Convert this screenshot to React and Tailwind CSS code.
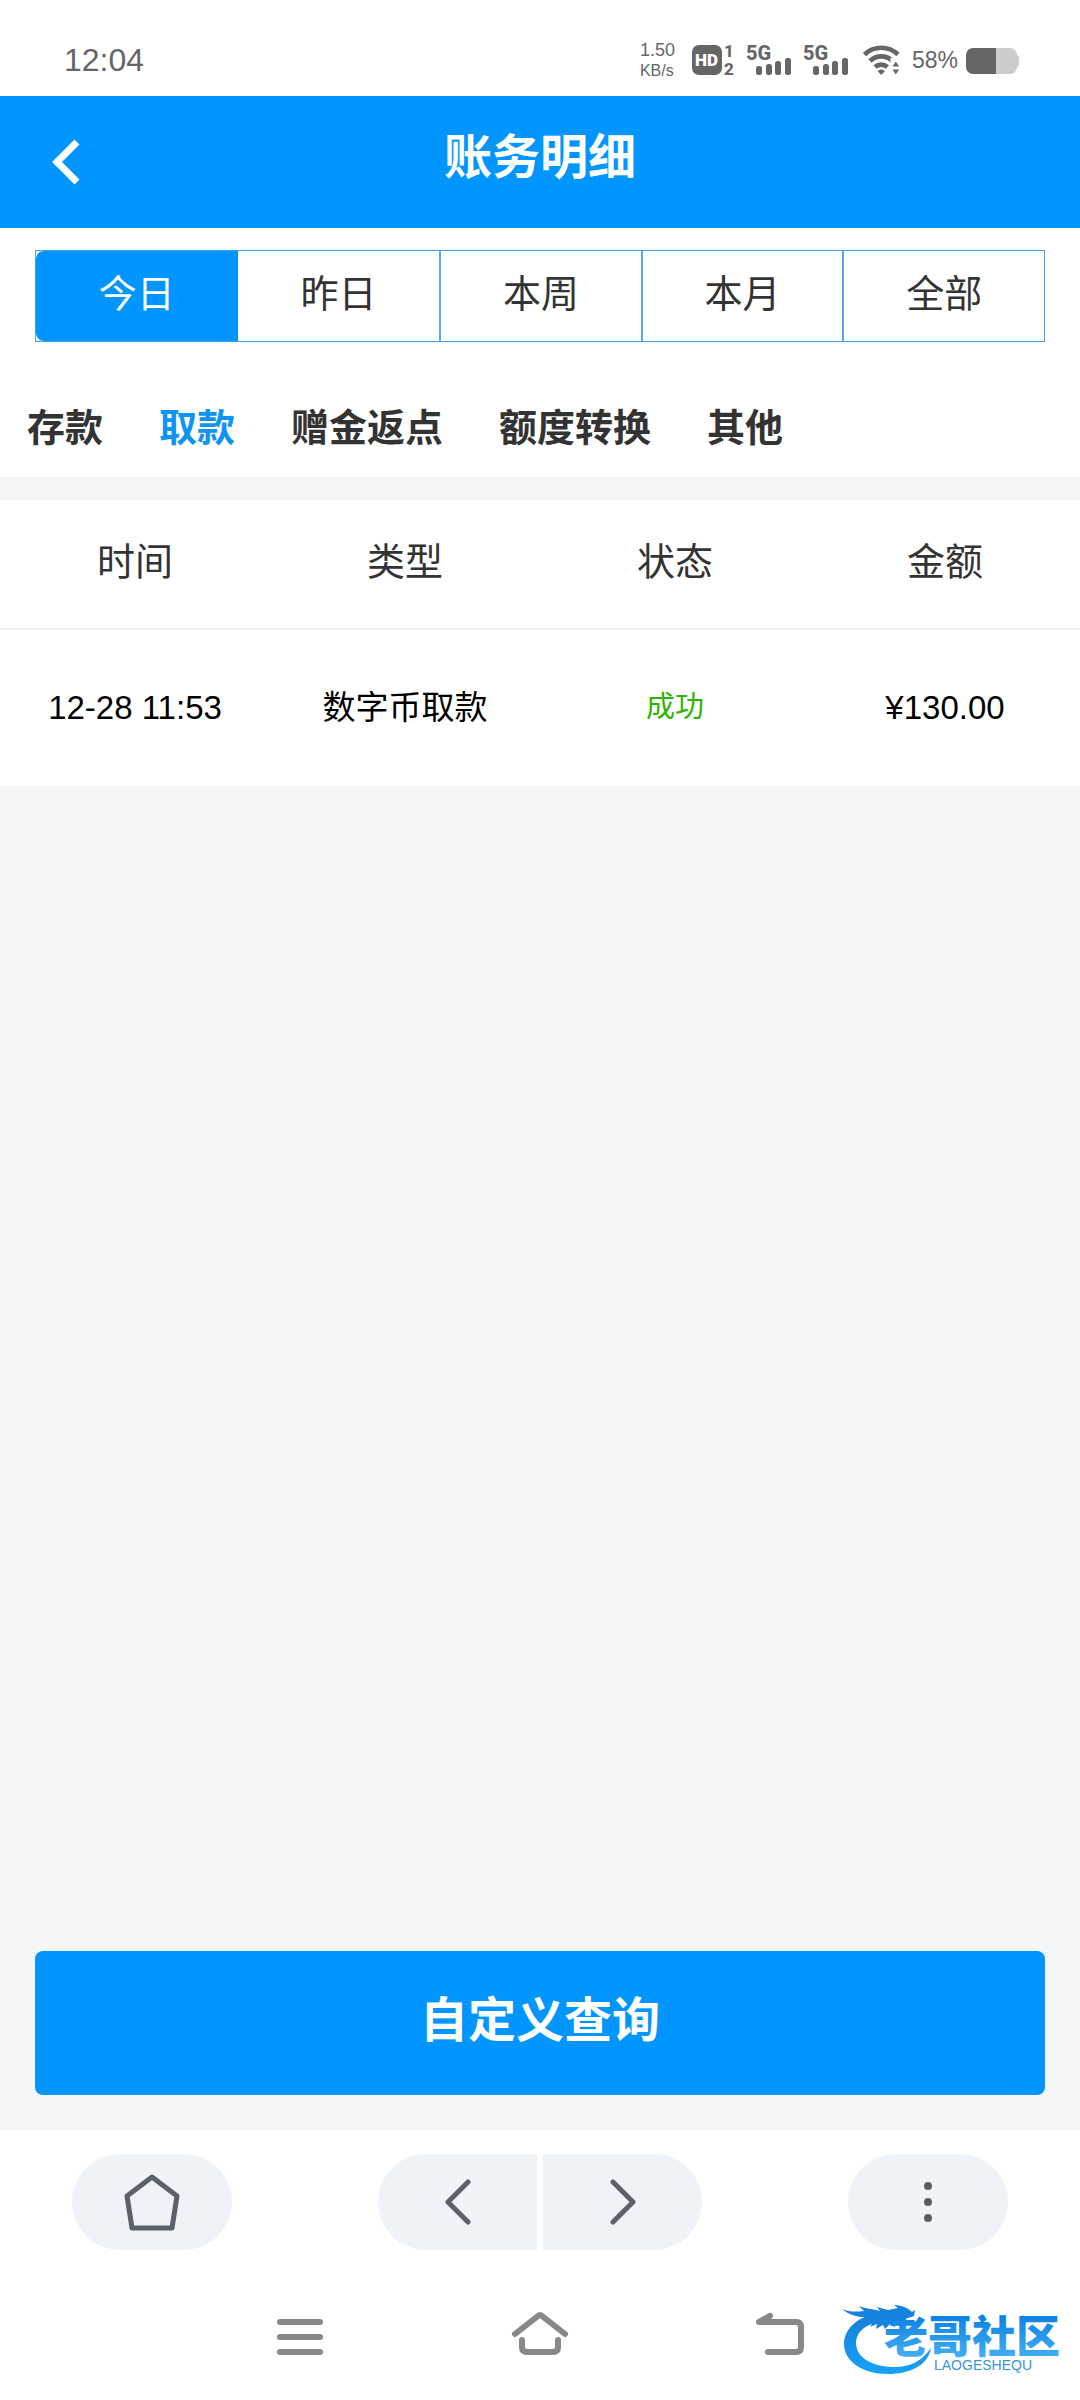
const ranges = ['今日', '昨日', '本周', '本月', '全部'];
const categories = ['存款', '取款', '赠金返点', '额度转换', '其他'];
const columns = ['时间', '类型', '状态', '金额'];
const records = [
  { time: '12-28 11:53', type: '数字币取款', status: '成功', amount: '¥130.00' },
];

function Signal() {
  return (
    <svg width="46" height="44" viewBox="0 -6 46 44" fill="#666">
      <text x="0" y="16" fontSize="20" fontWeight="800" fontFamily="Roboto, sans-serif">5G</text>
      <rect x="10" y="22" width="6" height="9" rx="2.5" />
      <rect x="20" y="20" width="6" height="11" rx="2.5" />
      <rect x="29" y="17" width="6" height="14" rx="2.5" />
      <rect x="39" y="14" width="6" height="17" rx="2.5" />
    </svg>
  );
}

function StatusBar() {
  return (
    <div className="flex h-24 items-center bg-white pt-6 pl-16 pr-[60px] text-[#666]">
      <span className="text-[32px] leading-none">12:04</span>
      <div className="ml-auto flex items-center">
        <div className="mr-[17px] flex flex-col gap-1">
          <span className="text-lg leading-[18px]">1.50</span>
          <span className="text-base leading-4">KB/s</span>
        </div>
        <svg className="mr-[10px]" width="44" height="44" viewBox="0 -6 44 44" fill="#666">
          <rect x="0" y="1" width="30" height="30" rx="7" />
          <text x="3" y="22" fontSize="17" fontWeight="900" fill="#fff" fontFamily="Roboto, sans-serif">HD</text>
          <text x="32" y="13" fontSize="17" fontWeight="800" fontFamily="Roboto, sans-serif">1</text>
          <text x="32" y="31" fontSize="17" fontWeight="800" fontFamily="Roboto, sans-serif">2</text>
        </svg>
        <div className="mr-[14px] flex gap-[11px]">
          <Signal />
          <Signal />
        </div>
        <svg className="mr-3" width="37" height="32" viewBox="0 0 37 32" fill="none" stroke="#666" strokeWidth="4.6">
          <path d="M1.500 10.500a24 24 0 0 1 33.500 0" />
          <path d="M7 17a16 16 0 0 1 22.500 0" />
          <path d="M12 23a9.500 9.500 0 0 1 12.500 0" />
          <path d="M14.500 27q3.800-3 7.500 0l-3.800 4z" fill="#666" stroke="none" />
          <path d="M27.500 14h10v18h-10z" fill="#fff" stroke="none" />
          <path d="M29.500 22.500l3.300-5 3.300 5zM29.500 25.500l3.300 5 3.300-5z" fill="#666" stroke="none" />
        </svg>
        <span className="mr-2 text-[23px] leading-none">58%</span>
        <svg width="54" height="32" viewBox="0 0 54 32">
          <path d="M30 4h14a7 7 0 0 1 7 7q2 1 2 3v6q0 2-2 3a7 7 0 0 1-7 7H30z" fill="#ccc" />
          <path d="M30 4H7a7 7 0 0 0-7 7v12a7 7 0 0 0 7 7h23z" fill="#666" />
        </svg>
      </div>
    </div>
  );
}

function Watermark() {
  return (
    <svg className="absolute right-[14px] bottom-6 h-24 w-[226px]" viewBox="0 -20 226 96" role="img" aria-label="老哥社区">
      <defs>
        <linearGradient id="word" x1="0" y1="0" x2="0" y2="1">
          <stop offset="0.2" stopColor="#0a80e2" />
          <stop offset="1" stopColor="#4fb8fb" />
        </linearGradient>
        <linearGradient id="dragon" x1="0" y1="0" x2="0" y2="1">
          <stop offset="0" stopColor="#157fdb" />
          <stop offset="1" stopColor="#17a2f5" />
        </linearGradient>
      </defs>
      <path
        d="M30 15C14 20 4 31 4 44C4 61 22 74 48 74C69 74 88 66 91 48C82 61 70 67 55 67C31 67 16 57 16 43C16 34 22 27 34 23z"
        fill="url(#dragon)"
      />
      <path
        d="M2 9C9 12 16 12 24 11L19 6C26 9 34 9 40 11L37 7L48 10L58 8L54 5C63 5 69 9 72 12L75 10L74 16C69 18 65 19 60 19L72 22L71 25L58 23L54 27L50 24L45 29L43 25L36 29L37 24L30 27L33 22L24 24L30 17C19 18 9 15 2 9z"
        fill="#1783de"
      />
      <text x="44" y="53" fontSize="44" fontWeight="900" fill="url(#word)" fontFamily="'Noto Sans CJK SC', sans-serif">老哥社区</text>
      <text x="94" y="70" fontSize="14" fill="#3b93da" fontFamily="'Liberation Sans', sans-serif">LAOGESHEQU</text>
    </svg>
  );
}

function BrowserBar() {
  return (
    <nav aria-label="浏览器" className="flex items-center justify-between bg-white px-[72px] py-6">
      <button aria-label="主页" className="flex h-24 w-40 items-center justify-center rounded-full bg-[#eff3f8]">
        <svg width="56" height="58" viewBox="0 0 56 58" fill="none" stroke="#5b616b" strokeWidth="5" strokeLinejoin="round">
          <path d="M28 4L53 23L48 55H8L3 23z" />
        </svg>
      </button>
      <div className="flex gap-[6px]">
        <button aria-label="后退" className="flex h-24 w-[159px] items-center justify-center rounded-l-full bg-[#eff3f8]">
          <svg width="26" height="46" viewBox="0 0 26 46" fill="none" stroke="#5b616b" strokeWidth="5" strokeLinecap="round" strokeLinejoin="round">
            <path d="M23 3L3 23L23 43" />
          </svg>
        </button>
        <button aria-label="前进" className="flex h-24 w-[159px] items-center justify-center rounded-r-full bg-[#eff3f8]">
          <svg width="26" height="46" viewBox="0 0 26 46" fill="none" stroke="#5b616b" strokeWidth="5" strokeLinecap="round" strokeLinejoin="round">
            <path d="M3 3L23 23L3 43" />
          </svg>
        </button>
      </div>
      <button aria-label="更多" className="flex h-24 w-40 items-center justify-center rounded-full bg-[#eff3f8]">
        <svg width="8" height="40" viewBox="0 0 8 40" fill="#5a5e63">
          <circle cx="4" cy="4" r="4" />
          <circle cx="4" cy="20" r="4" />
          <circle cx="4" cy="36" r="4" />
        </svg>
      </button>
    </nav>
  );
}

function SystemBar() {
  return (
    <div className="relative bg-white">
      <nav aria-label="系统" className="mx-auto grid h-[126px] w-2/3 grid-cols-3 place-items-center">
        <button aria-label="最近任务">
          <svg width="46" height="46" viewBox="0 0 46 46" stroke="#888" strokeWidth="6" strokeLinecap="round">
            <path d="M3 8H43M3 23H43M3 38H43" />
          </svg>
        </button>
        <button aria-label="桌面">
          <svg width="58" height="50" viewBox="0 -2 58 50" fill="none" stroke="#888" strokeWidth="6" strokeLinecap="round" strokeLinejoin="round">
            <path d="M4 20L27 2Q29 0 31 2L54 20M11 26V33Q11 38 16 38H42Q47 38 47 33V26" />
          </svg>
        </button>
        <button aria-label="返回">
          <svg width="48" height="50" viewBox="0 -2 48 50" fill="none" stroke="#888" strokeWidth="6" strokeLinecap="round" strokeLinejoin="round">
            <path d="M14 2L3 8H40Q45 8 45 13V33Q45 38 40 38H12" />
          </svg>
        </button>
      </nav>
      <Watermark />
    </div>
  );
}

export default function App() {
  return (
    <div className="flex min-h-screen flex-col bg-[#f4f6f8] font-['Liberation_Sans','Noto_Sans_CJK_SC',sans-serif] text-[#333]">
      <StatusBar />
      <header className="grid h-[132px] grid-cols-[1fr_auto_1fr] items-center bg-[#0095ff] text-white">
        <button aria-label="返回" className="ml-[52px] justify-self-start">
          <svg width="28" height="46" viewBox="0 0 28 46" fill="none" stroke="#fff" strokeWidth="7">
            <path d="M25 3L5 23L25 43" />
          </svg>
        </button>
        <h1 className="pb-2 text-5xl leading-none font-bold">账务明细</h1>
      </header>

      <section className="bg-white">
        <div className="px-[35px] pt-[22px]">
          <div className="grid h-[92px] grid-cols-5 border border-[#4a9fe0]">
            {ranges.map((label, i) => (
              <button
                key={label}
                aria-pressed={i === 0}
                className={
                  i === 0
                    ? 'rounded-l-lg bg-[#0095ff] pb-1 text-[38px] leading-none text-white'
                    : i === 1
                      ? 'pb-1 text-[38px] leading-none'
                      : 'border-l-2 border-[#5ba9ea] pb-1 text-[38px] leading-none'
                }
              >
                {label}
              </button>
            ))}
          </div>
        </div>
        <div className="flex h-[135px] items-center gap-14 pt-9 pl-[27px]">
          {categories.map((label, i) => (
            <button
              key={label}
              aria-pressed={i === 1}
              className={i === 1 ? 'text-[38px] leading-none font-bold text-[#0f93f5]' : 'text-[38px] leading-none font-bold'}
            >
              {label}
            </button>
          ))}
        </div>
      </section>

      <table className="mt-[23px] w-full table-fixed bg-white text-center">
        <thead>
          <tr className="h-[129px] border-b-2 border-[#f1f3f5] text-[38px]">
            {columns.map((label) => (
              <th key={label} scope="col" className="pb-1 font-normal">
                {label}
              </th>
            ))}
          </tr>
        </thead>
        <tbody>
          {records.map((r) => (
            <tr key={r.time} className="h-[157px] text-[33px] whitespace-nowrap text-black">
              <td>{r.time}</td>
              <td>{r.type}</td>
              <td className="text-[29px] text-[#2fb400]">{r.status}</td>
              <td>{r.amount}</td>
            </tr>
          ))}
        </tbody>
      </table>

      <div className="mt-auto px-[35px] pb-[35px]">
        <button className="h-36 w-full rounded-lg bg-[#0095ff] pb-1 text-5xl font-bold text-white">自定义查询</button>
      </div>
      <BrowserBar />
      <SystemBar />
    </div>
  );
}
